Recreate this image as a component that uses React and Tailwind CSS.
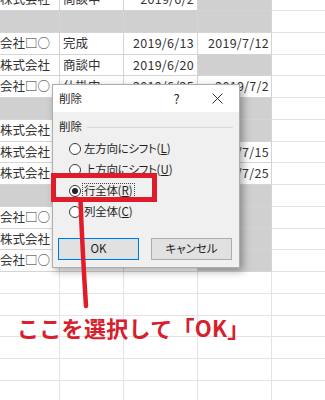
import React from "react";

const rows = [
  { a: "株式会社", b: "商談中", c: "2019/6/2", dGray: true },
  { gray: true },
  { a: "会社□○", b: "完成", c: "2019/6/13", d: "2019/7/12" },
  { a: "株式会社", b: "商談中", c: "2019/6/20", dGray: true },
  { a: "会社□○", b: "仕掛中", c: "2019/6/25", d: "2019/7/2" },
  { gray: true },
  { a: "株式会社", b: "商談中", c: "2019/6/27", dGray: true },
  { a: "株式会社", b: "完成", c: "2019/6/28", d: "2019/7/15" },
  { a: "株式会社", b: "完成", c: "2019/7/1", d: "2019/7/25" },
  { gray: true },
  { a: "会社□○", b: "商談中", c: "2019/7/3", dGray: true },
  { a: "株式会社", b: "商談中", c: "2019/7/5", dGray: true },
  { a: "会社□○", b: "商談中", c: "2019/7/8", dGray: true },
  { empty: true },
  { empty: true },
  { empty: true },
  { empty: true },
  { empty: true },
  { empty: true },
];

function Row({ row, first }) {
  const line = row.empty ? "border-[#e3e3e3]" : "border-[#d4d4d4]";
  const fill = row.gray ? "bg-[#d0d0d0]" : "bg-white";
  return (
    <div className={`flex h-[21.75px] ${first ? "-mt-[10.75px]" : ""}`}>
      <div className={`flex w-[60px] items-center overflow-hidden whitespace-nowrap border-r border-b ${line} ${fill}`}>
        {row.a}
      </div>
      <div className={`flex w-[64px] items-center overflow-hidden whitespace-nowrap border-r border-b pl-[3px] ${line} ${fill}`}>
        {row.b}
      </div>
      <div className={`flex w-[74px] items-center justify-end whitespace-nowrap border-r border-b pr-[3px] tracking-[0.3px] ${line} ${fill}`}>
        {row.c}
      </div>
      <div
        className={`flex w-[74px] items-center justify-end whitespace-nowrap border-r border-b pr-[2px] tracking-[0.3px] ${line} ${
          row.gray || row.dGray ? "bg-[#d0d0d0]" : "bg-white"
        }`}
      >
        {row.d}
      </div>
      <div className="flex-1 border-b border-[#e3e3e3] bg-white" />
    </div>
  );
}

function Radio({ checked, label, letter, focus }) {
  return (
    <div className="flex h-[21px] items-center">
      <span className="flex h-[12px] w-[12px] items-center justify-center rounded-full border border-[#3a3a3a] bg-white">
        {checked && <span className="h-[6px] w-[6px] rounded-full bg-[#222]" />}
      </span>
      <span
        className={`ml-[1px] px-[1px] leading-[13px] border border-dotted whitespace-nowrap ${
          focus ? "border-[#444]" : "border-transparent"
        }`}
      >
        <span className="tracking-[-0.3px] [font-feature-settings:'palt']">{label}</span>(<u>{letter}</u>)
      </span>
    </div>
  );
}

export default function App() {
  return (
    <div className="relative h-[400px] w-[325px] overflow-hidden bg-white font-['Noto_Sans_CJK_JP',sans-serif] text-[12.5px] text-[#333]">
      <div className="flex flex-col">
        {rows.map((r, i) => (
          <Row key={i} row={r} first={i === 0} />
        ))}
      </div>

      {/* delete dialog */}
      <div className="absolute left-[52px] top-[84px] flex h-[184px] w-[188px] flex-col border border-[#adadad] bg-[#f0f0f0] text-[11.5px] text-[#1f1f1f] shadow-[3px_3px_8px_rgba(0,0,0,0.35)]">
        <div className="flex h-[27px] items-center bg-white pl-[6px]">
          <span>削除</span>
          <span className="ml-auto flex w-[41px] justify-center text-[13px]">?</span>
          <span className="mr-[1px] flex w-[41px] justify-center">
            <svg width="11" height="11" viewBox="0 0 11 11">
              <path d="M0.5 0.5 L10.5 10.5 M10.5 0.5 L0.5 10.5" stroke="#333" strokeWidth="1" />
            </svg>
          </span>
        </div>
        <div className="flex flex-1 flex-col">
          <div className="mt-[8px] flex h-[14px] items-center pl-[6px]">
            <span>削除</span>
            <span className="ml-[5px] mr-[6px] h-px flex-1 bg-[#d9d9d9]" />
          </div>
          <div className="mt-[4px] flex flex-col pl-[16px]">
            <Radio label="左方向にシフト" letter="L" />
            <Radio label="上方向にシフト" letter="U" />
            <Radio label="行全体" letter="R" checked focus />
            <Radio label="列全体" letter="C" />
          </div>
          <div className="mt-[16px] flex gap-[12px] pl-[5px]">
            <button className="flex h-[22px] w-[81px] items-center justify-center border border-[#0078d7] bg-[#e1e1e1] shadow-[inset_0_0_0_1px_#cde4f7]">
              OK
            </button>
            <button className="flex h-[22px] w-[81px] items-center justify-center border border-[#adadad] bg-[#e1e1e1] [font-feature-settings:'palt']">
              キャンセル
            </button>
          </div>
        </div>
      </div>

      {/* red annotation */}
      <div className="absolute left-[51px] top-[173px] h-[29px] w-[106px] border-[5px] border-[#e01b2a]" />
      <svg className="pointer-events-none absolute left-0 top-0" width="325" height="400">
        <path d="M80.5 200 C82 240 84 275 86 306" stroke="#e01b2a" strokeWidth="4.5" strokeLinecap="round" fill="none" />
      </svg>
      <div className="absolute left-[17px] top-[316px] whitespace-nowrap text-[22px] font-bold leading-none tracking-[0.3px] text-[#d7202c]">
        ここを選択して「OK」
      </div>
    </div>
  );
}
